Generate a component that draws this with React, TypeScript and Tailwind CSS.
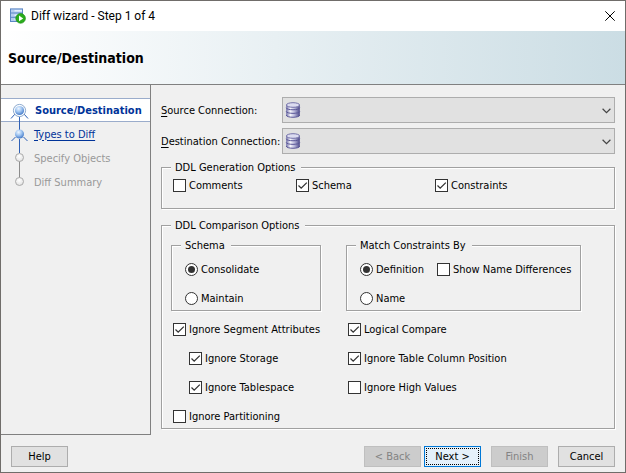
import { useId, useState, type ReactNode } from "react";

const fieldsetClass =
  "min-w-0 border border-[#a0a0a0] shadow-[1px_1px_0_#fff,inset_1px_1px_0_#fff]";

function Legend({ children }: { children: ReactNode }) {
  return <legend className="bg-[#f0f0f0] pl-1 pr-[6px] leading-[13px]">{children}</legend>;
}

function Check({ label, initial = false }: { label: string; initial?: boolean }) {
  const id = useId();
  const [checked, setChecked] = useState(initial);
  return (
    <div className="flex h-[13px] items-center gap-[3px]">
      <span className="grid size-[13px] shrink-0">
        <input
          id={id}
          type="checkbox"
          checked={checked}
          onChange={(e) => setChecked(e.target.checked)}
          className="peer size-[13px] appearance-none border border-[#333] bg-white [grid-area:1/1]"
        />
        <svg
          viewBox="0 0 13 13"
          className="pointer-events-none hidden size-[13px] [grid-area:1/1] peer-checked:block"
          fill="none"
          stroke="#333"
          strokeWidth="1.3"
        >
          <path d="M2.5 6.5 L5.2 9.2 L10.8 3.6" />
        </svg>
      </span>
      <label htmlFor={id} className="whitespace-nowrap leading-[13px]">
        {label}
      </label>
    </div>
  );
}

function Radio({ label, name, initial = false }: { label: string; name: string; initial?: boolean }) {
  const id = useId();
  return (
    <div className="flex h-[13px] items-center gap-[3px]">
      <span className="grid size-[13px] shrink-0 place-items-center">
        <input
          id={id}
          type="radio"
          name={name}
          defaultChecked={initial}
          className="peer size-[13px] appearance-none rounded-full border border-[#333] bg-white [grid-area:1/1]"
        />
        <span className="pointer-events-none hidden size-[7px] rounded-full bg-[#333] [grid-area:1/1] peer-checked:block" />
      </span>
      <label htmlFor={id} className="whitespace-nowrap leading-[13px]">
        {label}
      </label>
    </div>
  );
}

function DatabaseIcon() {
  const id = useId();
  return (
    <svg viewBox="0 0 16 16" className="pointer-events-none absolute left-[3px] top-[5px] size-4">
      <defs>
        <linearGradient id={id}>
          <stop offset="0" stopColor="#6d6ba6" />
          <stop offset="0.3" stopColor="#f8f8fd" />
          <stop offset="0.6" stopColor="#b9b8da" />
          <stop offset="1" stopColor="#4a4788" />
        </linearGradient>
      </defs>
      <path d="M1.2 3 V13 C1.2 16.2 14.8 16.2 14.8 13 V3 Z" fill={`url(#${id})`} />
      <path
        d="M1.2 5.8 C1.2 8.4 14.8 8.4 14.8 5.8 M1.2 9.4 C1.2 12 14.8 12 14.8 9.4 M1.2 13 C1.2 16 14.8 16 14.8 13"
        fill="none"
        stroke="#5a5798"
        strokeWidth="1"
      />
      <ellipse cx="8" cy="3" rx="6.6" ry="2.3" fill="#dcdcf0" stroke="#6966a2" strokeWidth="0.9" />
    </svg>
  );
}

function Connection({ first, rest }: { first: string; rest: string }) {
  const id = useId();
  return (
    <>
      <label htmlFor={id} className="whitespace-nowrap">
        <span className="underline underline-offset-2">{first}</span>
        {rest}
      </label>
      <div className="relative">
        <select
          id={id}
          className="block h-[26px] w-full appearance-none border border-[#adadad] bg-[#e1e1e1] pl-6 pr-5"
        >
          <option value="" />
        </select>
        <DatabaseIcon />
        <svg
          viewBox="0 0 9 6"
          className="pointer-events-none absolute right-1 top-[11px] h-[6px] w-[9px]"
          fill="none"
          stroke="#444"
          strokeWidth="1.2"
        >
          <path d="M0.6 0.8 L4.5 4.6 L8.4 0.8" />
        </svg>
      </div>
    </>
  );
}

function AppIcon() {
  return (
    <svg viewBox="0 0 16 16" className="size-4">
      <rect x="0.5" y="0.9" width="12" height="12.6" fill="#b4cdf0" stroke="#5b87c4" />
      <path d="M1 5H12.5M1 9.3H12.5" stroke="#5b87c4" />
      <path d="M4.5 2.8H12M4.5 7.2H12M4.5 11.4H12" stroke="#e4eefb" strokeWidth="1.6" />
      <circle cx="10.6" cy="10.4" r="4.8" fill="#2bad1c" stroke="#1a8c12" strokeWidth="0.7" />
      <path d="M9 7.6 L13.2 10.4 L9 13.2 Z" fill="#fff" />
    </svg>
  );
}

function StepTrail() {
  return (
    <svg viewBox="0 0 20 96" className="pointer-events-none absolute left-2 top-[13px] h-24 w-5" fill="none">
      <defs>
        <radialGradient id="ball" cx="0.4" cy="0.3" r="0.75">
          <stop offset="0" stopColor="#eef6ff" />
          <stop offset="0.45" stopColor="#a3c7f2" />
          <stop offset="1" stopColor="#3a72c4" />
        </radialGradient>
        <radialGradient id="pearl" cx="0.45" cy="0.35" r="0.7">
          <stop offset="0" stopColor="#fff" />
          <stop offset="1" stopColor="#dedede" />
        </radialGradient>
      </defs>
      <path d="M10.5 19 V32 M10.5 41 V55" stroke="#2f60b5" />
      <path d="M10.5 63 V80" stroke="#8c8c8c" />
      <path d="M6 16 L2 20.5 M15 16 L19 20.5 M6.5 39 L2.5 43 M14.5 39 L18.5 43" stroke="#2f60b5" />
      <circle cx="10.5" cy="12.5" r="6.1" fill="#fff" stroke="#7f9fc8" strokeWidth="0.9" />
      <circle cx="10.5" cy="12.5" r="4.6" fill="url(#ball)" />
      <circle cx="10.5" cy="36" r="4.5" fill="url(#ball)" />
      <circle cx="10.5" cy="59.5" r="4" fill="url(#pearl)" stroke="#a4a4a4" strokeWidth="0.9" />
      <circle cx="10.5" cy="83.5" r="4" fill="url(#pearl)" stroke="#a4a4a4" strokeWidth="0.9" />
    </svg>
  );
}

const buttonClass = "h-[21px] w-[57px] border text-center leading-[19px] whitespace-nowrap";

export default function App() {
  return (
    <div className="flex min-h-screen w-full flex-col border border-[#706d6a] bg-[#f0f0f0] font-['DejaVu_Sans_Condensed','DejaVu_Sans',sans-serif] text-[11px] leading-[13px] text-black">
      <div className="flex h-[30px] items-center gap-[5px] bg-white pl-[9px] pr-[10px]">
        <AppIcon />
        <h1 className="flex-1 font-[Roboto,sans-serif] text-[12px] leading-4">Diff wizard - Step 1 of 4</h1>
        <button type="button" aria-label="Close" className="size-[10px]">
          <svg viewBox="0 0 10 10" className="size-[10px]" stroke="#000" strokeWidth="1">
            <path d="M0.3 0.3 L9.7 9.7 M9.7 0.3 L0.3 9.7" />
          </svg>
        </button>
      </div>
      <header className="flex h-[54px] items-center border-b border-[#808080] bg-linear-to-r from-white to-[#cbdde4] px-[7px]">
        <h2 className="text-[14px] font-bold leading-[18px]">Source/Destination</h2>
      </header>

      <div className="flex flex-1">
        <nav className="relative w-[150px] shrink-0 border-b border-r border-[#808080] pt-[13px]">
          <ol>
            <li className="flex h-6 items-center border-y border-[#9aaccb] bg-white pl-[34px] font-bold text-[#003399]">
              Source/Destination
            </li>
            <li className="flex h-6 items-center pl-[33px]">
              <a href="#types" className="text-[#003399] underline underline-offset-2">
                Types to Diff
              </a>
            </li>
            <li className="flex h-6 items-center pl-[33px] text-[#999]">Specify Objects</li>
            <li className="flex h-6 items-center pl-[33px] text-[#999]">Diff Summary</li>
          </ol>
          <StepTrail />
        </nav>

        <main className="flex min-w-0 flex-1 flex-col pb-[6px] pl-[10px] pr-[10px] pt-3">
          <div className="mb-[7px] grid grid-cols-[121px_1fr] items-center gap-y-[5px]">
            <Connection first="S" rest="ource Connection:" />
            <Connection first="D" rest="estination Connection:" />
          </div>

          <fieldset className={`${fieldsetClass} mb-[10px] px-[9px] pb-4`}>
            <Legend>DDL Generation Options</Legend>
            <div className="grid grid-cols-[123px_139px_1fr] pl-[2px] pt-[5px]">
              <Check label="Comments" />
              <Check label="Schema" initial />
              <Check label="Constraints" initial />
            </div>
          </fieldset>

          <fieldset className={`${fieldsetClass} px-[9px] pb-[5px]`}>
            <Legend>DDL Comparison Options</Legend>
            <div className="grid grid-cols-[150px_235px] gap-x-[25px] gap-y-3 pt-[7px]">
              <fieldset className={`${fieldsetClass} px-[9px] pb-[5px]`}>
                <Legend>Schema</Legend>
                <div className="flex flex-col gap-4 pl-1 pt-[11px]">
                  <Radio name="schema" label="Consolidate" initial />
                  <Radio name="schema" label="Maintain" />
                </div>
              </fieldset>
              <fieldset className={`${fieldsetClass} px-[9px] pb-[5px]`}>
                <Legend>Match Constraints By</Legend>
                <div className="grid grid-cols-[77px_1fr] gap-y-4 pl-1 pt-[11px]">
                  <Radio name="match" label="Definition" initial />
                  <Check label="Show Name Differences" />
                  <Radio name="match" label="Name" />
                </div>
              </fieldset>
              <div className="flex flex-col gap-4 pl-[2px]">
                <Check label="Ignore Segment Attributes" initial />
                <div className="flex flex-col gap-4 pl-4">
                  <Check label="Ignore Storage" initial />
                  <Check label="Ignore Tablespace" initial />
                </div>
                <Check label="Ignore Partitioning" />
              </div>
              <div className="flex flex-col gap-4 pl-[2px]">
                <Check label="Logical Compare" initial />
                <Check label="Ignore Table Column Position" initial />
                <Check label="Ignore High Values" />
              </div>
            </div>
          </fieldset>
        </main>
      </div>

      <footer className="flex items-center px-[10px] pb-[5px] pt-[11px]">
        <button type="button" className={`${buttonClass} border-[#adadad] bg-[#e1e1e1]`}>
          Help
        </button>
        <div className="ml-auto flex gap-[10px]">
          <div className="flex gap-[3px]">
            <button type="button" disabled className={`${buttonClass} border-[#bfbfbf] bg-[#ccc] text-[#838383]`}>
              &lt; Back
            </button>
            <button
              type="button"
              className={`${buttonClass} border-[#0078d7] bg-[#e5f1fb] outline-1 -outline-offset-3 outline-dotted outline-black`}
            >
              Next &gt;
            </button>
          </div>
          <button type="button" disabled className={`${buttonClass} border-[#bfbfbf] bg-[#ccc] text-[#838383]`}>
            Finish
          </button>
          <button type="button" className={`${buttonClass} border-[#adadad] bg-[#e1e1e1]`}>
            Cancel
          </button>
        </div>
      </footer>
    </div>
  );
}
